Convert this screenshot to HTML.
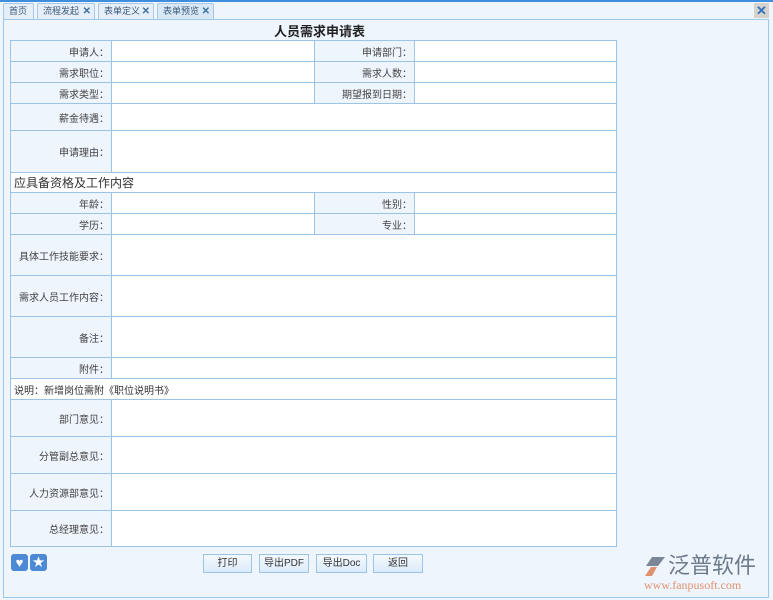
<!DOCTYPE html>
<html><head><meta charset="utf-8"><style>
*{margin:0;padding:0;box-sizing:border-box}
body{width:773px;height:600px;background:#eef5fd;position:relative;overflow:hidden;font-family:"Liberation Sans","Noto Sans CJK SC",sans-serif;font-size:11px;color:#333}
.a{position:absolute}
.tab{position:absolute;top:3px;height:17px;border:1px solid #a9c7e6;border-bottom:none;background:#e6eff9;font-size:9px;color:#3a5a7a;line-height:15px;padding-left:5px;border-radius:2px 2px 0 0;white-space:nowrap}
.tab b{color:#3d6fa3;font-size:10px;position:absolute;right:3px;top:0}
.l{position:absolute;background:#eef5fd;border:1px solid #9cc3e8;text-align:right;padding-right:2px;display:flex;align-items:center;justify-content:flex-end;font-size:10px;color:#444}
.v{position:absolute;background:#fff;border:1px solid #9cc3e8}
.w{position:absolute;background:#fff;border:1px solid #9cc3e8;display:flex;align-items:center;padding-left:3px}
.btn{position:absolute;top:554px;height:19px;border:1px solid #9cc3e8;background:linear-gradient(#f4f9fe,#dcebfa);font-size:10px;text-align:center;line-height:17px;color:#333}
</style></head><body>
<div class="a" style="left:0;top:0;width:773px;height:2px;background:#3f8ede"></div>
<div class="tab" style="left:3px;width:31px">首页</div>
<div class="tab" style="left:37px;width:58px">流程发起<b>✕</b></div>
<div class="tab" style="left:98px;width:56px">表单定义<b>✕</b></div>
<div class="tab" style="left:157px;width:57px;background:#d9e8f7">表单预览<b>✕</b></div>
<div class="a" style="left:754px;top:3px;width:15px;height:15px;background:#d6d3cc;color:#2f6fbf;font-size:13px;line-height:15px;text-align:center;font-weight:bold">✕</div>
<div class="a" style="left:3px;top:19px;width:766px;height:579px;border:1px solid #9cc8ee;background:#eef5fd"></div>
<div class="a" style="left:10px;top:21px;width:607px;text-align:center;font-size:13px;font-weight:bold;color:#222;padding-left:12px">人员需求申请表</div>

<div class="l" style="left:10px;top:40px;width:102px;height:22px">申请人：</div><div class="v" style="left:111px;top:40px;width:204px;height:22px"></div>
<div class="l" style="left:314px;top:40px;width:101px;height:22px">申请部门：</div><div class="v" style="left:414px;top:40px;width:203px;height:22px"></div>
<div class="l" style="left:10px;top:61px;width:102px;height:22px">需求职位：</div><div class="v" style="left:111px;top:61px;width:204px;height:22px"></div>
<div class="l" style="left:314px;top:61px;width:101px;height:22px">需求人数：</div><div class="v" style="left:414px;top:61px;width:203px;height:22px"></div>
<div class="l" style="left:10px;top:82px;width:102px;height:22px">需求类型：</div><div class="v" style="left:111px;top:82px;width:204px;height:22px"></div>
<div class="l" style="left:314px;top:82px;width:101px;height:22px">期望报到日期：</div><div class="v" style="left:414px;top:82px;width:203px;height:22px"></div>
<div class="l" style="left:10px;top:103px;width:102px;height:28px">薪金待遇：</div><div class="v" style="left:111px;top:103px;width:506px;height:28px"></div>
<div class="l" style="left:10px;top:130px;width:102px;height:43px">申请理由：</div><div class="v" style="left:111px;top:130px;width:506px;height:43px"></div>
<div class="w" style="left:10px;top:172px;width:607px;height:21px;font-size:12px">应具备资格及工作内容</div>
<div class="l" style="left:10px;top:192px;width:102px;height:22px">年龄：</div><div class="v" style="left:111px;top:192px;width:204px;height:22px"></div>
<div class="l" style="left:314px;top:192px;width:101px;height:22px">性别：</div><div class="v" style="left:414px;top:192px;width:203px;height:22px"></div>
<div class="l" style="left:10px;top:213px;width:102px;height:22px">学历：</div><div class="v" style="left:111px;top:213px;width:204px;height:22px"></div>
<div class="l" style="left:314px;top:213px;width:101px;height:22px">专业：</div><div class="v" style="left:414px;top:213px;width:203px;height:22px"></div>
<div class="l" style="left:10px;top:234px;width:102px;height:42px">具体工作技能要求：</div><div class="v" style="left:111px;top:234px;width:506px;height:42px"></div>
<div class="l" style="left:10px;top:275px;width:102px;height:42px">需求人员工作内容：</div><div class="v" style="left:111px;top:275px;width:506px;height:42px"></div>
<div class="l" style="left:10px;top:316px;width:102px;height:42px">备注：</div><div class="v" style="left:111px;top:316px;width:506px;height:42px"></div>
<div class="l" style="left:10px;top:357px;width:102px;height:22px">附件：</div><div class="v" style="left:111px;top:357px;width:506px;height:22px"></div>
<div class="w" style="left:10px;top:378px;width:607px;height:22px;font-size:10px">说明：新增岗位需附《职位说明书》</div>
<div class="l" style="left:10px;top:399px;width:102px;height:38px">部门意见：</div><div class="v" style="left:111px;top:399px;width:506px;height:38px"></div>
<div class="l" style="left:10px;top:436px;width:102px;height:38px">分管副总意见：</div><div class="v" style="left:111px;top:436px;width:506px;height:38px"></div>
<div class="l" style="left:10px;top:473px;width:102px;height:38px">人力资源部意见：</div><div class="v" style="left:111px;top:473px;width:506px;height:38px"></div>
<div class="l" style="left:10px;top:510px;width:102px;height:37px">总经理意见：</div><div class="v" style="left:111px;top:510px;width:506px;height:37px"></div>

<div class="a" style="left:11px;top:554px;width:17px;height:17px;background:#4c8ad6;border-radius:3px;color:#fff;text-align:center;line-height:17px;font-size:13px">♥</div>
<div class="a" style="left:30px;top:554px;width:17px;height:17px;background:#4c8ad6;border-radius:3px;color:#fff;text-align:center;line-height:17px;font-size:12px">★</div>
<div class="btn" style="left:203px;width:49px">打印</div>
<div class="btn" style="left:259px;width:50px">导出PDF</div>
<div class="btn" style="left:316px;width:51px">导出Doc</div>
<div class="btn" style="left:373px;width:50px">返回</div>

<svg class="a" style="left:643px;top:555px" width="24" height="24" viewBox="0 0 24 24"><path d="M9 2 L22 2 L15 11 L3 11 Z" fill="#7b8796"/><path d="M8 12 L14 12 L9 21 L2 21 Z" fill="#e0926f"/></svg>
<div class="a" style="left:668px;top:550px;font-size:22px;color:#6d7a8a;font-family:'Noto Sans CJK SC',sans-serif;line-height:28px">泛普软件</div>
<div class="a" style="left:644px;top:578px;font-size:12px;color:#e0926f;font-family:'Liberation Serif',serif">www.fanpusoft.com</div>
</body></html>
